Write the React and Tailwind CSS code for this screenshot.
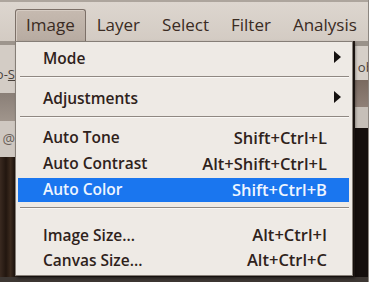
import React from "react";

function Arrow() {
  return (
    <svg width="7" height="12" viewBox="0 0 7 12" className="block">
      <polygon points="0,0 7,6 0,12" fill="#161210" />
    </svg>
  );
}

function Item({ label, shortcut, arrow, active }) {
  return (
    <div
      className={
        "flex items-center ml-[2px] mr-[3px] pl-[25px] " +
        (arrow ? "pr-[8px] " : "pr-[22px] ") +
        (active
          ? "h-[24px] my-px bg-[#1a76ef] text-[#eef5ff]"
          : "h-[26px] text-[#2f221b]")
      }
    >
      <span className="text-[15.5px] font-semibold leading-none whitespace-nowrap">{label}</span>
      <span className="flex-1" />
      {shortcut && (
        <span className="text-[16.5px] font-semibold leading-none whitespace-nowrap">{shortcut}</span>
      )}
      {arrow && (
        <span className="-mt-[4px]">
          <Arrow />
        </span>
      )}
    </div>
  );
}

function Row25({ label, shortcut }) {
  return (
    <div className="flex items-center h-[25px] ml-[2px] mr-[3px] pl-[25px] pr-[22px] text-[#2f221b]">
      <span className="text-[15.5px] font-semibold leading-none whitespace-nowrap">{label}</span>
      <span className="flex-1" />
      <span className="text-[16.5px] font-semibold leading-none whitespace-nowrap">{shortcut}</span>
    </div>
  );
}

function Sep({ h, top }) {
  return (
    <div className={"flex flex-col ml-[4px] mr-[3px] " + h}>
      <div className={top} />
      <div className="h-px bg-[#8f8882]" />
      <div className="h-px bg-[#faf8f5]" />
    </div>
  );
}

export default function App() {
  const tab = "h-[32px] px-[10px] leading-[30px] text-[17px] font-normal border border-b-0 rounded-t-[3px] whitespace-nowrap";
  return (
    <div className="relative w-[369px] h-[282px] flex overflow-hidden bg-[#d8d0c8] font-['Open_Sans','Noto_Sans',sans-serif]">
      <div className="flex-1 flex flex-col">
        <div className="h-[2px] bg-[#ada59d]" />
        <div className="h-[39px] flex items-end pl-[15px] bg-[linear-gradient(#ddd6cf,#d3cbc3)] text-[#3a2b23]">
          <div className={tab + " border-[#7c7068] bg-[linear-gradient(#c6bab0,#b7aba1)] shadow-[inset_1px_1px_0_#d6ccc3]"}>Image</div>
          <div className={tab + " border-transparent"}>Layer</div>
          <div className={tab + " border-transparent"}>Select</div>
          <div className={tab + " border-transparent"}>Filter</div>
          <div className={tab + " border-transparent"}>Analysis</div>
        </div>
        <div className="flex-1 flex">
          <div className="w-[15px] flex flex-col overflow-hidden">
            <div className="h-[4px] bg-[#9d958d]" />
            <div className="h-[48px] bg-[#d3ccc5] flex items-end justify-end pb-[12px] overflow-hidden">
              <span className="text-[13px] leading-none text-[#4a423c] whitespace-nowrap">o-<span className="underline">S</span></span>
            </div>
            <div className="h-[28px] bg-[linear-gradient(#8a7f77,#a0958c)]" />
            <div className="h-[36px] bg-[#cfc8c1] flex items-center justify-end">
              <span className="text-[14px] leading-none text-[#6a615a]">@</span>
            </div>
            <div className="flex-1 bg-[linear-gradient(90deg,#3a2a20,#22160f_40%,#3b2a1e_70%,#1c130e)]" />
          </div>
          <div className="flex-1 bg-[#2a1f19]" />
          <div className="w-[13px] flex flex-col overflow-hidden">
            <div className="h-[5px] bg-[#9a928a]" />
            <div className="h-[34px] bg-[#d6cfc8] flex items-end pb-[6px] pl-[3px] overflow-hidden">
              <span className="text-[13px] leading-none text-[#4a423c] whitespace-nowrap">ob</span>
            </div>
            <div className="h-[27px] bg-[linear-gradient(#7a6a60,#8f8077)]" />
            <div className="h-[21px] bg-[#c6bfb8]" />
            <div className="flex-1 bg-[#150f0d]" />
          </div>
        </div>
        <div className="h-[5px] bg-[#3d3733]" />
      </div>
      <div className="w-[3px] bg-[#8c8680]" />

      <div className="absolute left-[15px] top-[41px] w-[338px] h-[235px] flex flex-col border border-[#857e77] bg-[#eeeae5] shadow-[2px_2px_3px_rgba(0,0,0,0.55)]">
        <div className="h-[4px]" />
        <Item label="Mode" arrow />
        <Sep h="h-[14px]" top="h-[4px]" />
        <Item label="Adjustments" arrow />
        <Sep h="h-[13px]" top="h-[4px]" />
        <Item label="Auto Tone" shortcut="Shift+Ctrl+L" />
        <Item label="Auto Contrast" shortcut="Alt+Shift+Ctrl+L" />
        <Item label="Auto Color" shortcut="Shift+Ctrl+B" active />
        <Sep h="h-[20px]" top="h-[4px]" />
        <Row25 label="Image Size..." shortcut="Alt+Ctrl+I" />
        <Row25 label="Canvas Size..." shortcut="Alt+Ctrl+C" />
      </div>
    </div>
  );
}
